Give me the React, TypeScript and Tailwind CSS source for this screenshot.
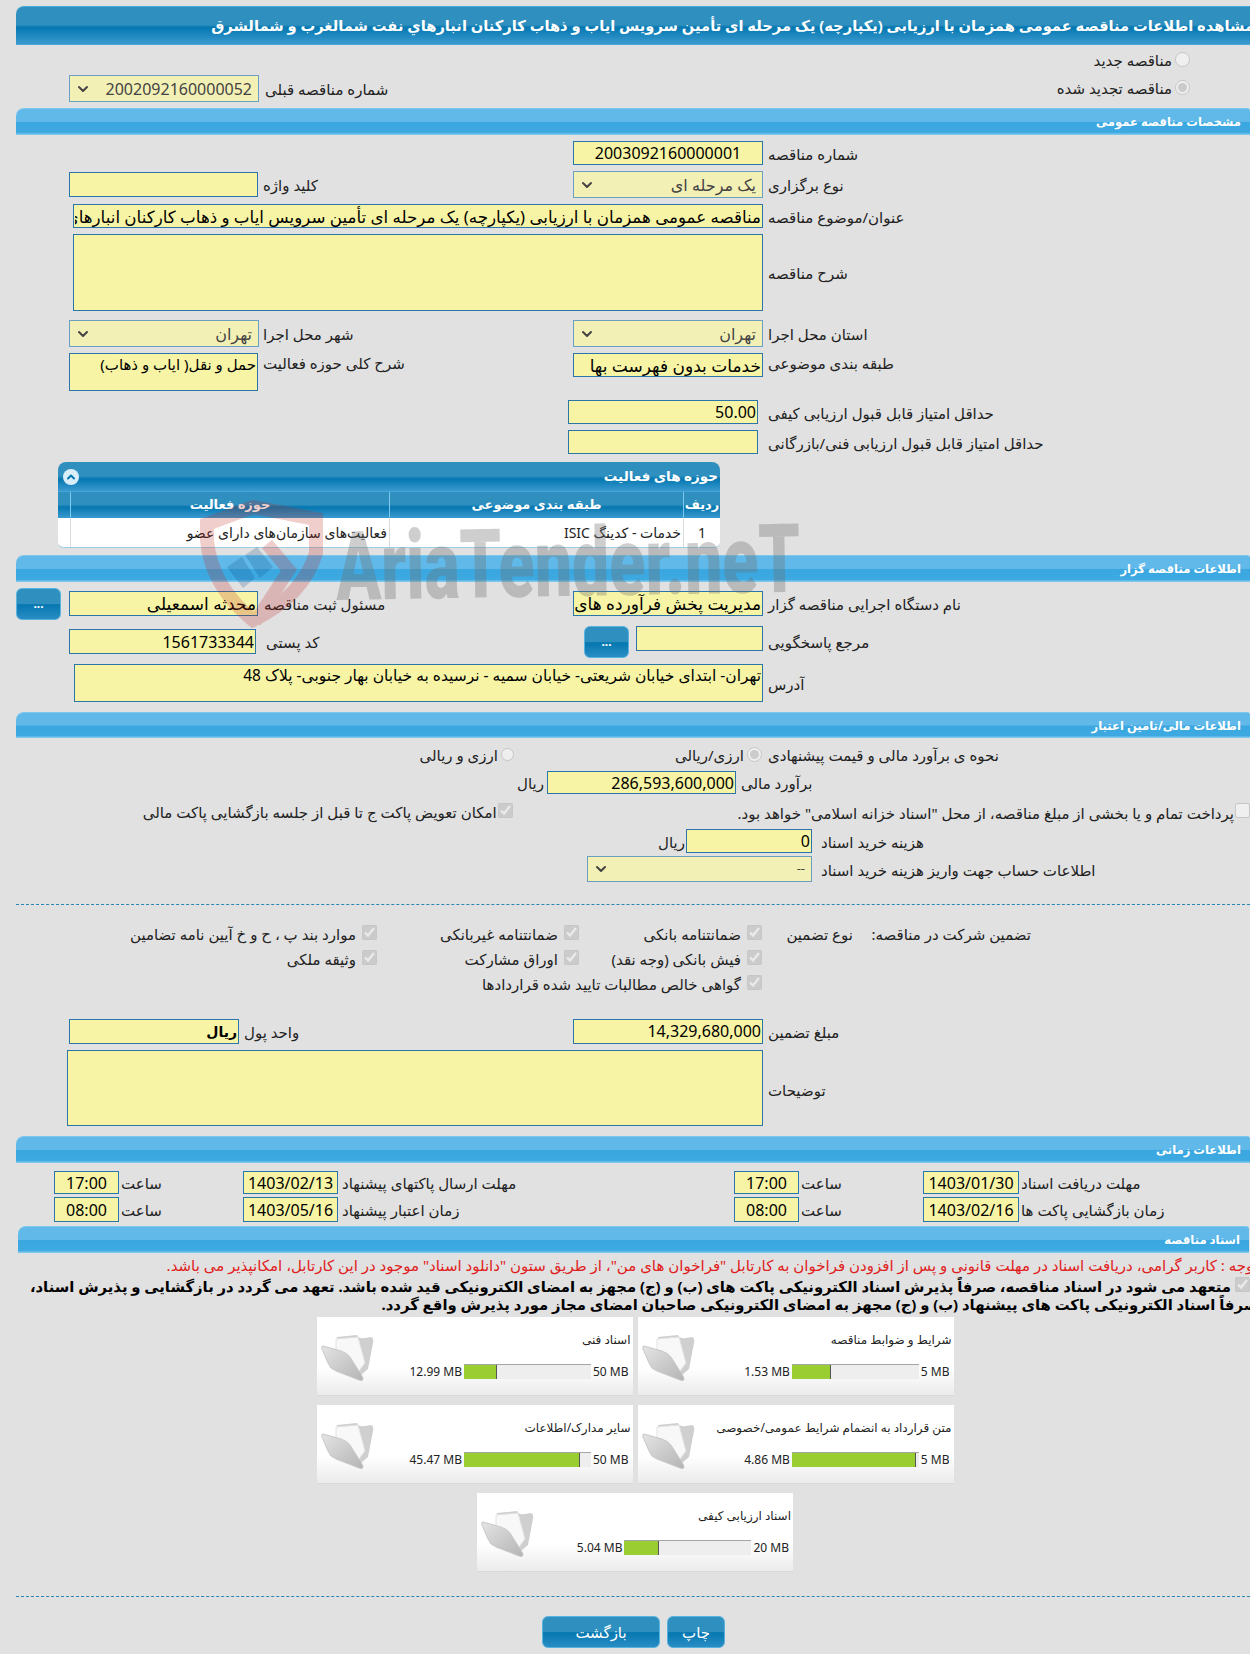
import React from 'react';
import { ChevronDown, ChevronUp } from 'lucide-react';

const inputCls = 'bg-[#f7f5a5] border border-[#2a76a8] outline-none text-black px-[1px] min-w-0 h-full';

const SectionBar = ({ title, className = '' }: { title: string; className?: string }) => (
  <div dir="rtl" className={`h-[27px] rounded-tl-[8px] rounded-tr-[3px] border-t border-[#7cc8ee] bg-[linear-gradient(#61b9e9_0%,#61b9e9_48%,#3aa7e0_52%,#3ea9e1_90%,#8ed0f0_100%)] text-white font-bold text-[11.6px] pr-[9px] flex items-center ${className}`}>
    <span className="whitespace-nowrap">{title}</span>
  </div>
);

const Label = ({ children, className = '' }: { children: React.ReactNode; className?: string }) => (
  <span dir="rtl" className={`text-[15px] pt-[2px] text-[#222] whitespace-nowrap ${className}`}>{children}</span>
);

const Select = ({ value, className = '', text = 'text-[16px]' }: { value: string; className?: string; text?: string }) => (
  <div className={`h-full flex items-center justify-between bg-[#f3f0b6] border border-[#6b9fbf] pl-[5px] pr-[6px] text-[#444] ${text} ${className}`}>
    <ChevronDown size={16} strokeWidth={3} className="text-[#444]" />
    <span dir="rtl" className="whitespace-nowrap">{value}</span>
  </div>
);

const Input = ({ value = '', className = '', text = 'text-[16px]', dir = 'rtl' }: { value?: string; className?: string; text?: string; dir?: string }) => (
  <input readOnly dir={dir} value={value} className={`${inputCls} ${text} ${className}`} />
);

const Radio = ({ label, checked = false, className = '' }: { label: string; checked?: boolean; className?: string }) => (
  <div dir="rtl" className={`flex items-center gap-[3px] ${className}`}>
    <input type="radio" disabled defaultChecked={checked} className="w-[15px] h-[15px] m-0" />
    <Label>{label}</Label>
  </div>
);

const Check = ({ label, className = '' }: { label: string; className?: string }) => (
  <div dir="rtl" className={`flex items-center gap-[6px] ${className}`}>
    <input type="checkbox" disabled defaultChecked className="w-[15px] h-[15px] m-0" />
    <Label className="mt-[2px]">{label}</Label>
  </div>
);

const blueBtn = 'rounded-[6px] border border-[#59b3df] bg-[linear-gradient(#2f90c0_0%,#2f90c0_50%,#0577b0_52%,#2a8dc4_100%)] text-white';

const DotsButton = () => (
  <div className={`h-[32px] w-[45px] font-bold text-[12px] flex items-end justify-center pb-[6px] ${blueBtn}`}>...</div>
);

const Folder = () => (
  <svg width="54" height="50" viewBox="0 0 54 50" className="shrink-0">
    <defs>
      <linearGradient id="fold" x1="0" y1="0" x2="1" y2="1">
        <stop offset="0" stopColor="#e4e4e4" />
        <stop offset="1" stopColor="#b4b4b4" />
      </linearGradient>
    </defs>
    <path d="M16 4 L36 2 Q38 6 44 5 L50 4 Q53 5 52 10 L47 36 L40 42 L16 22 Z" fill="#cfcfcf" />
    <path d="M15 6 L37 4 L44 30 L38 38 L15 21 Z" fill="#f8f8f8" stroke="#e2e2e2" />
    <path d="M2 13 L20 18 Q26 20 29 24 L41 43 Q44 49 38 47 L15 38 Q9 36 7 30 L1 16 Q0 13 2 13 Z" fill="url(#fold)" stroke="#c8c8c8" />
  </svg>
);

const DocCard = ({ title, used, max, percent }: { title: string; used: string; max: string; percent: number }) => (
  <div dir="ltr" className="w-[316px] h-[79px] flex items-start bg-[linear-gradient(#ffffff_0%,#ffffff_65%,#ebebeb_100%)] border-b border-[#d8d8d8] pl-[4px] pr-[2px] pt-[16px]">
    <Folder />
    <div className="flex-1 flex flex-col items-end min-w-0">
      <span dir="rtl" className="text-[12px] text-[#222] whitespace-nowrap h-[14px] leading-[14px]">{title}</span>
      <div className="flex items-center mt-[17px] pr-[2px] h-[15px] text-[12px] text-[#222]">
        <span className="mr-[2px] whitespace-nowrap">{used}</span>
        <div className="w-[127px] h-[15px] bg-[#eeeeee] border-t border-[#a5a5a5] flex">
          <div className="h-full bg-[#9acd32] border-r border-[#555]" style={{ width: `${percent}%` }} />
        </div>
        <span className="ml-[2px] whitespace-nowrap">{max}</span>
      </div>
    </div>
  </div>
);

const Watermark = () => (
  <div className="absolute left-[190px] top-[495px] w-[630px] h-[140px] pointer-events-none">
    <svg width="140" height="140" viewBox="0 0 140 140" className="absolute left-[5px] top-[3px] opacity-[0.22]">
      <path d="M12 26 L58 9 L121 21 L121 55 Q108 98 58 122 Q16 88 12 42 Z" fill="none" stroke="#c0241c" strokeWidth="14" />
      <path d="M32 69 L47 59 L60 80 L48 90 Z" fill="#10508a" />
      <path d="M50 57 L62 49 L78 69 L65 80 Z" fill="#10508a" />
      <path d="M72 46 L94 72 L60 124" fill="none" stroke="#c0241c" strokeWidth="13" />
    </svg>
    <span className="absolute left-[146px] top-[22px] font-['Roboto',sans-serif] font-black text-[96px] leading-[100px] text-[#6e6e6e] opacity-[0.33] whitespace-nowrap origin-left scale-x-[0.69] -rotate-1">AriaTender.neT</span>
  </div>
);

export default function App() {
  return (
    <div dir="ltr" className="relative w-[1250px] h-[1654px] overflow-hidden bg-[#e1e1e1] font-['Noto_Sans','DejaVu_Sans',sans-serif]">
      {/* title */}
      <div dir="rtl" className="ml-[16px] h-[39px] rounded-tl-[8px] border-t border-b border-[#4aa6d8] bg-[linear-gradient(#2f90c0_0%,#2f90c0_48%,#0577b0_55%,#3a9ad0_100%)] text-white font-bold text-[14.7px] flex items-center overflow-hidden" style={{ marginTop: 6 }}>
        <span className="whitespace-nowrap -mr-[4px]">مشاهده اطلاعات مناقصه عمومی همزمان با ارزیابی (یکپارچه) یک مرحله ای تأمین سرویس ایاب و ذهاب کارکنان انبارهاي نفت شمالغرب و شمالشرق</span>
      </div>

      <div className="h-[63px] flex justify-between pl-[69px] pr-[60px]">
        <div className="flex items-center mt-[30px] h-[27px]">
          <Select value="2002092160000052" className="w-[190px]" />
          <Label className="ml-[6px]">شماره مناقصه قبلی</Label>
        </div>
        <div className="flex flex-col items-end pt-[7px] gap-[14px]">
          <Radio label="مناقصه جدید" className="h-[14px]" />
          <Radio label="مناقصه تجدید شده" checked className="h-[14px]" />
        </div>
      </div>

      <SectionBar title="مشخصات مناقصه عمومی" className="ml-[16px]" />

      <div className="mt-[6px] h-[24px] ml-[573px] flex items-center">
        <Input value="2003092160000001" className="w-[190px] text-center" dir="ltr" />
        <Label className="ml-[5px]">شماره مناقصه</Label>
      </div>

      <div className="mt-[6px] h-[27px] ml-[69px] grid grid-cols-[504px_1fr]">
        <div className="flex items-center">
          <Input className="w-[189px] !h-[25px]" />
          <Label className="ml-[5px]">کلید واژه</Label>
        </div>
        <div className="flex items-center">
          <Select value="یک مرحله ای" className="w-[190px]" />
          <Label className="ml-[5px]">نوع برگزاری</Label>
        </div>
      </div>

      <div className="mt-[6px] h-[24px] ml-[73px] flex items-center">
        <Input value="مناقصه عمومی همزمان با ارزیابی (یکپارچه) یک مرحله ای تأمین سرویس ایاب و ذهاب کارکنان انبارهاي نفت شمالغرب و شمالشرق" text="text-[16.7px]" className="w-[690px]" />
        <Label className="ml-[5px]">عنوان/موضوع مناقصه</Label>
      </div>

      <div className="mt-[6px] h-[77px] ml-[73px] flex items-center">
        <textarea readOnly className={`${inputCls} w-[690px] resize-none`} />
        <Label className="ml-[5px]">شرح مناقصه</Label>
      </div>

      <div className="mt-[9px] h-[27px] ml-[69px] grid grid-cols-[504px_1fr]">
        <div className="flex items-center">
          <Select value="تهران" className="w-[190px]" />
          <Label className="ml-[4px]">شهر محل اجرا</Label>
        </div>
        <div className="flex items-center">
          <Select value="تهران" className="w-[190px]" />
          <Label className="ml-[5px]">استان محل اجرا</Label>
        </div>
      </div>

      <div className="mt-[6px] h-[38px] ml-[69px] grid grid-cols-[504px_1fr] grid-rows-[38px]">
        <div className="flex items-start">
          <textarea readOnly dir="rtl" value="حمل و نقل( ایاب و ذهاب)" className={`${inputCls} w-[189px] !h-[38px] resize-none text-[15px] leading-[20px] text-[#222]`} />
          <Label className="ml-[5px] !pt-0 -mt-[1px]">شرح کلی حوزه فعالیت</Label>
        </div>
        <div className="flex items-start h-[24px]">
          <Input value="خدمات بدون فهرست بها" text="text-[17px]" className="w-[190px]" />
          <Label className="ml-[5px] !pt-0 -mt-[1px]">طبقه بندی موضوعی</Label>
        </div>
      </div>

      <div className="mt-[9px] h-[24px] ml-[568px] flex items-center">
        <Input value="50.00" className="w-[190px] pl-[2px]" />
        <Label className="ml-[10px]">حداقل امتیاز قابل قبول ارزیابی کیفی</Label>
      </div>
      <div className="mt-[6px] h-[24px] ml-[568px] flex items-center">
        <Input className="w-[190px]" />
        <Label className="ml-[10px]">حداقل امتیاز قابل قبول ارزیابی فنی/بازرگانی</Label>
      </div>

      {/* activity table */}
      <div className="mt-[8px] ml-[58px] w-[662px] h-[86px] rounded-t-[8px] rounded-b-[6px] overflow-hidden border-b border-[#9ccbe4]">
        <div dir="rtl" className="h-[29px] bg-[linear-gradient(#2f90c0_0%,#2f90c0_48%,#0577b0_58%,#3a9ad0_100%)] flex items-center justify-between text-white font-bold text-[13.5px] pr-[2px] pl-[5px]">
          <span className="whitespace-nowrap">حوزه های فعالیت</span>
          <span className="w-[16px] h-[16px] rounded-full bg-[#d9eef9] flex items-center justify-center">
            <ChevronUp size={12} strokeWidth={4} className="text-[#0577b0]" />
          </span>
        </div>
        <div className="grid grid-cols-[13px_319px_294px_36px] h-[27px] bg-[linear-gradient(#2f90c0_0%,#2f90c0_48%,#0577b0_58%,#3a9ad0_100%)] border-t border-[#4aa6d8] text-white font-bold text-[13px]">
          <div className="border-r border-[#7cc8ee]" />
          <div dir="rtl" className="border-r border-[#7cc8ee] flex items-center justify-center">حوزه فعالیت</div>
          <div dir="rtl" className="border-r border-[#7cc8ee] flex items-center justify-center">طبقه بندی موضوعی</div>
          <div dir="rtl" className="flex items-center justify-center">ردیف</div>
        </div>
        <div className="grid grid-cols-[13px_319px_294px_36px] h-[29px] bg-white text-[14px] text-[#222]">
          <div className="border-r border-[#dcdcdc]" />
          <div dir="rtl" className="border-r border-[#dcdcdc] flex items-center pr-[2px] whitespace-nowrap">فعالیت‌های سازمان‌های دارای عضو</div>
          <div dir="rtl" className="border-r border-[#dcdcdc] flex items-center pr-[2px] whitespace-nowrap">خدمات - کدینگ ISIC</div>
          <div className="flex items-center justify-center">1</div>
        </div>
      </div>

      <SectionBar title="اطلاعات مناقصه گزار" className="mt-[7px] ml-[16px]" />

      <div className="mt-[6px] h-[32px] ml-[16px] flex">
        <DotsButton />
        <div className="ml-[8px] mt-[3px] h-[25px] w-[504px] flex items-center">
          <Input value="محدثه اسمعیلی" text="text-[17px]" className="w-[189px]" />
          <Label className="ml-[6px]">مسئول ثبت مناقصه</Label>
        </div>
        <div className="mt-[3px] h-[25px] flex items-center">
          <Input value="مدیریت پخش فرآورده های نفتی منطقه تهران" text="text-[17px]" className="w-[190px]" />
          <Label className="ml-[5px]">نام دستگاه اجرایی مناقصه گزار</Label>
        </div>
      </div>

      <div className="mt-[6px] h-[32px] ml-[69px] flex">
        <div className="mt-[3px] h-[25px] flex items-center w-[515px]">
          <Input value="1561733344" className="w-[187px]" />
          <Label className="ml-[10px]">کد پستی</Label>
        </div>
        <DotsButton />
        <div className="ml-[7px] h-[25px] flex items-center">
          <Input className="w-[127px]" />
          <Label className="ml-[5px] mt-[5px]">مرجع پاسخگویی</Label>
        </div>
      </div>

      <div className="mt-[6px] h-[38px] ml-[74px] flex items-center">
        <textarea readOnly dir="rtl" value="تهران- ابتدای خیابان شریعتی- خیابان سمیه - نرسیده به خیابان بهار جنوبی- پلاک 48" className={`${inputCls} w-[689px] resize-none text-[15.5px] leading-[20px] text-[#222]`} />
        <Label className="ml-[5px]">آدرس</Label>
      </div>

      <SectionBar title="اطلاعات مالی/تامین اعتبار" className="mt-[10px] ml-[16px] !h-[26px]" />

      <div className="mt-[4px] h-[24px] flex items-center">
        <Radio label="ارزی و ریالی" className="ml-[420px] w-[94px]" />
        <Radio label="ارزی/ریالی" checked className="ml-[148px] w-[100px]" />
        <Label className="ml-[6px]">نحوه ی برآورد مالی و قیمت پیشنهادی</Label>
      </div>

      <div className="mt-[5px] h-[23px] flex items-center">
        <Label className="ml-[514px] w-[30px]">ریال</Label>
        <Input value="286,593,600,000" className="ml-[3px] w-[189px]" />
        <Label className="ml-[5px]">برآورد مالی</Label>
      </div>

      <div className="mt-[6px] h-[20px] flex items-center">
        <Check label="امکان تعویض پاکت ج تا قبل از جلسه بازگشایی پاکت مالی" className="ml-[138px] w-[376px] !gap-[1px]" />
        <Label className="ml-[211px] w-[512px] mt-[4px]">پرداخت تمام و یا بخشی از مبلغ مناقصه، از محل "اسناد خزانه اسلامی" خواهد بود.</Label>
        <input type="checkbox" disabled className="w-[15px] h-[15px] m-0 ml-[1px] shrink-0" />
      </div>

      <div className="mt-[9px] h-[24px] flex items-center">
        <Label className="ml-[659px] w-[26px]">ریال</Label>
        <Input value="0" className="ml-[1px] w-[126px]" />
        <Label className="ml-[9px]">هزینه خرید اسناد</Label>
      </div>

      <div className="mt-[3px] h-[26px] flex items-center">
        <Select value="--" className="ml-[587px] w-[225px]" text="text-[13px]" />
        <Label className="ml-[9px]">اطلاعات حساب جهت واریز هزینه خرید اسناد</Label>
      </div>

      <div className="mt-[22px] ml-[16px] border-t border-dashed border-[#2a86b4]" />

      <div dir="rtl" className="mt-[15px] mr-[219px] grid grid-cols-[178px_91px_183px_202px_auto] auto-rows-[25px] items-center">
        <Label className="mt-[2px]">تضمین شرکت در مناقصه:</Label>
        <Label className="mt-[2px]">نوع تضمین</Label>
        <Check label="ضمانتنامه بانکی" />
        <Check label="ضمانتنامه غیربانکی" />
        <Check label="موارد بند پ ، ح و خ آیین نامه تضامین" />
        <span />
        <span />
        <Check label="فیش بانکی (وجه نقد)" />
        <Check label="اوراق مشارکت" />
        <Check label="وثیقه ملکی" />
        <span />
        <span />
        <Check label="گواهی خالص مطالبات تایید شده قراردادها" className="col-span-3" />
      </div>

      <div className="mt-[24px] h-[24px] ml-[69px] grid grid-cols-[504px_1fr]">
        <div className="flex items-center">
          <Input value="ریال" text="text-[14px] font-bold" className="w-[170px]" />
          <Label className="ml-[5px]">واحد پول</Label>
        </div>
        <div className="flex items-center">
          <Input value="14,329,680,000" className="w-[190px]" />
          <Label className="ml-[5px]">مبلغ تضمین</Label>
        </div>
      </div>

      <div className="mt-[7px] h-[76px] ml-[67px] flex items-center">
        <textarea readOnly className={`${inputCls} w-[696px] resize-none`} />
        <Label className="ml-[5px] mt-[2px]">توضیحات</Label>
      </div>

      <SectionBar title="اطلاعات زمانی" className="mt-[10px] ml-[16px]" />

      <div className="mt-[8px] h-[23px] flex items-center">
        <Input value="17:00" dir="ltr" className="ml-[54px] w-[65px] text-center" />
        <Label className="ml-[2px] w-[122px] text-left">ساعت</Label>
        <Input value="1403/02/13" dir="ltr" className="w-[95px] text-center" />
        <Label className="ml-[4px] w-[392px] text-left">مهلت ارسال پاکتهای پیشنهاد</Label>
        <Input value="17:00" dir="ltr" className="w-[65px] text-center" />
        <Label className="ml-[2px] w-[122px] text-left">ساعت</Label>
        <Input value="1403/01/30" dir="ltr" className="w-[96px] text-center" />
        <Label className="ml-[2px]">مهلت دریافت اسناد</Label>
      </div>
      <div className="mt-[3px] h-[25px] flex items-center">
        <Input value="08:00" dir="ltr" className="ml-[54px] w-[65px] text-center" />
        <Label className="ml-[2px] w-[122px] text-left">ساعت</Label>
        <Input value="1403/05/16" dir="ltr" className="w-[95px] text-center" />
        <Label className="ml-[4px] w-[392px] text-left">زمان اعتبار پیشنهاد</Label>
        <Input value="08:00" dir="ltr" className="w-[65px] text-center" />
        <Label className="ml-[2px] w-[122px] text-left">ساعت</Label>
        <Input value="1403/02/16" dir="ltr" className="w-[96px] text-center" />
        <Label className="ml-[2px]">زمان بازگشایی پاکت ها</Label>
      </div>

      <SectionBar title="اسناد مناقصه" className="mt-[4px] ml-[18px] mr-[1px]" />

      <div dir="rtl" className="mt-[2px] h-[20px] -mr-[8px] flex items-center text-[15px] text-[#e0201c] whitespace-nowrap">
        توجه : کاربر گرامی، دریافت اسناد در مهلت قانونی و پس از افزودن فراخوان به کارتابل "فراخوان های من"، از طریق ستون "دانلود اسناد" موجود در این کارتابل، امکانپذیر می باشد.
      </div>

      <p dir="rtl" className="mt-[2px] h-[38px] -mr-[8px] text-[14.8px] leading-[18px] font-bold text-black whitespace-nowrap">
        <input type="checkbox" disabled defaultChecked className="w-[15px] h-[15px] mr-[8px] ml-[4px] align-top" />
        متعهد می شود در اسناد مناقصه، صرفاً پذیرش اسناد الکترونیکی پاکت های (ب) و (ج) مجهز به امضای الکترونیکی قید شده باشد. تعهد می گردد در بازگشایی و پذیرش اسناد،
        <br />
        صرفاً اسناد الکترونیکی پاکت های پیشنهاد (ب) و (ج) مجهز به امضای الکترونیکی صاحبان امضای مجاز مورد پذیرش واقع گردد.
      </p>

      <div dir="rtl" className="mt-[2px] ml-[315px] w-[640px] flex flex-wrap justify-center gap-x-[5px] gap-y-[9px]">
        <DocCard title="شرایط و ضوابط مناقصه" used="1.53 MB" max="5 MB" percent={31} />
        <DocCard title="اسناد فنی" used="12.99 MB" max="50 MB" percent={26} />
        <DocCard title="متن قرارداد به انضمام شرایط عمومی/خصوصی" used="4.86 MB" max="5 MB" percent={98} />
        <DocCard title="سایر مدارک/اطلاعات" used="45.47 MB" max="50 MB" percent={91} />
        <DocCard title="اسناد ارزیابی کیفی" used="5.04 MB" max="20 MB" percent={27} />
      </div>

      <div className="mt-[24px] ml-[16px] border-t border-dashed border-[#2a86b4]" />

      <div className="mt-[19px] ml-[542px] flex gap-[7px]">
        <div dir="rtl" className={`w-[118px] h-[32px] text-[15px] flex items-center justify-center ${blueBtn}`}>بازگشت</div>
        <div dir="rtl" className={`w-[58px] h-[32px] text-[15px] flex items-center justify-center ${blueBtn}`}>چاپ</div>
      </div>

      <Watermark />
    </div>
  );
}
